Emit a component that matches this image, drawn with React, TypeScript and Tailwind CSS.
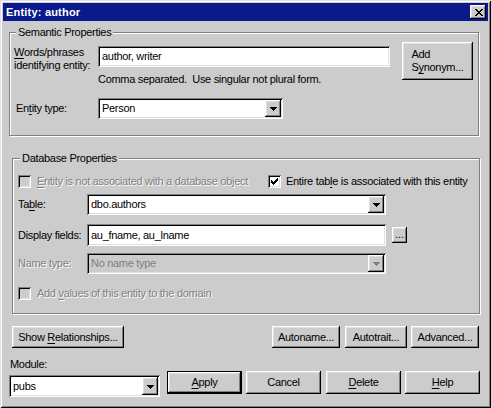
import React from 'react';

// classic 3D edges
const RAISED =
  'bg-[#cccccc] shadow-[inset_-1px_-1px_0_#000,inset_1px_1px_0_#fff,inset_-2px_-2px_0_#808080,inset_2px_2px_0_#dfdfdf]';
const DEFAULT_BTN =
  'bg-[#cccccc] shadow-[inset_0_0_0_1px_#000,inset_-2px_-2px_0_#000,inset_2px_2px_0_#fff,inset_-3px_-3px_0_#808080,inset_3px_3px_0_#dfdfdf]';
const SUNKEN =
  'shadow-[inset_1px_1px_0_#808080,inset_-1px_-1px_0_#fff,inset_2px_2px_0_#000,inset_-2px_-2px_0_#dfdfdf]';
const ETCHED = 'border border-[#808080] shadow-[inset_1px_1px_0_#fff,1px_1px_0_#fff]';
const DISABLED = 'text-[#808080] [text-shadow:1px_1px_0_#fff]';

const U = ({ children }: { children: React.ReactNode }) => (
  <span className="underline decoration-1 underline-offset-[2px]">{children}</span>
);

const Arrow = ({ disabled }: { disabled?: boolean }) => (
  <svg width="7" height="4" viewBox="0 0 7 4" shapeRendering="crispEdges">
    <g fill={disabled ? '#808080' : '#000'}>
      <rect x="0" y="0" width="7" height="1" />
      <rect x="1" y="1" width="5" height="1" />
      <rect x="2" y="2" width="3" height="1" />
      <rect x="3" y="3" width="1" height="1" />
    </g>
  </svg>
);

const CloseGlyph = () => (
  <svg width="8" height="7" viewBox="0 0 8 7" shapeRendering="crispEdges">
    <g fill="#000">
      <rect x="0" y="0" width="2" height="1" />
      <rect x="6" y="0" width="2" height="1" />
      <rect x="1" y="1" width="2" height="1" />
      <rect x="5" y="1" width="2" height="1" />
      <rect x="2" y="2" width="4" height="1" />
      <rect x="3" y="3" width="2" height="1" />
      <rect x="2" y="4" width="4" height="1" />
      <rect x="1" y="5" width="2" height="1" />
      <rect x="5" y="5" width="2" height="1" />
      <rect x="0" y="6" width="2" height="1" />
      <rect x="6" y="6" width="2" height="1" />
    </g>
  </svg>
);

const CheckGlyph = () => (
  <svg width="7" height="7" viewBox="0 0 7 7" shapeRendering="crispEdges">
    <g fill="#000">
      <rect x="6" y="0" width="1" height="1" />
      <rect x="5" y="1" width="2" height="1" />
      <rect x="0" y="2" width="1" height="1" />
      <rect x="4" y="2" width="3" height="1" />
      <rect x="0" y="3" width="2" height="1" />
      <rect x="3" y="3" width="3" height="1" />
      <rect x="0" y="4" width="5" height="1" />
      <rect x="1" y="5" width="3" height="1" />
      <rect x="2" y="6" width="1" height="1" />
    </g>
  </svg>
);

const Check = ({ checked, disabled }: { checked?: boolean; disabled?: boolean }) => (
  <span
    className={`w-[13px] h-[13px] shrink-0 flex items-center justify-center ${
      disabled ? 'bg-[#cccccc]' : 'bg-white'
    } ${SUNKEN}`}
  >
    {checked && <CheckGlyph />}
  </span>
);

const Btn = ({
  className = '',
  primary,
  children,
}: {
  className?: string;
  primary?: boolean;
  children: React.ReactNode;
}) => (
  <button
    type="button"
    className={`${primary ? DEFAULT_BTN : RAISED} shrink-0 whitespace-nowrap flex items-center justify-center ${className}`}
  >
    {children}
  </button>
);

const Combo = ({
  className = '',
  value,
  disabled,
}: {
  className?: string;
  value: string;
  disabled?: boolean;
}) => (
  <div className={`${SUNKEN} ${disabled ? 'bg-[#cccccc]' : 'bg-white'} shrink-0 flex p-[2px] ${className}`}>
    <span className={`flex-1 flex items-center pl-[2px] ${disabled ? 'text-[#808080]' : ''}`}>{value}</span>
    <span className={`w-[16px] flex items-center justify-center pt-[1px] ${RAISED}`}>
      <Arrow disabled={disabled} />
    </span>
  </div>
);

const Field = ({ className = '', value }: { className?: string; value: string }) => (
  <div className={`${SUNKEN} bg-white shrink-0 flex items-center pl-[4px] ${className}`}>{value}</div>
);

const Group = ({
  className = '',
  label,
  labelPos,
  children,
}: {
  className?: string;
  label: string;
  labelPos: string;
  children: React.ReactNode;
}) => (
  <div className={`relative ${ETCHED} ${className}`}>
    <span className={`absolute -top-[7px] ${labelPos} px-[2px] bg-[#cccccc]`}>{label}</span>
    {children}
  </div>
);

export default function App() {
  return (
    <div className="w-[491px] h-[408px] bg-[#cccccc] p-[3px] flex flex-col whitespace-nowrap text-black text-[11px] leading-[13px] tracking-[-0.3px] font-['Liberation_Sans',Arial,sans-serif] shadow-[inset_1px_1px_0_#dfdfdf,inset_-1px_-1px_0_#000,inset_2px_2px_0_#fff,inset_-2px_-2px_0_#808080]">
      {/* Title bar */}
      <div className="h-[18px] shrink-0 bg-[#0a1a8c] flex items-center justify-between pl-[3px] pr-[2px]">
        <span className="text-white font-bold leading-[18px] tracking-[0.2px]">Entity: author</span>
        <button type="button" className={`w-[16px] h-[14px] pl-[1px] flex items-center justify-center ${RAISED}`}>
          <CloseGlyph />
        </button>
      </div>

      <div className="pl-[6px] pr-[9px] flex flex-col">
        {/* Semantic Properties */}
        <Group label="Semantic Properties" labelPos="left-[6px]" className="mt-[11px] h-[104px]">
          <div className="flex items-start pl-[4px] pt-[9px]">
            <div className="w-[84px] mt-[4px]">
              <U>W</U>ords/phrases
              <br />
              identifying entity:
            </div>
            <div className="w-[292px] mt-[4px] flex flex-col">
              <Field className="h-[21px]" value="author, writer" />
              <div className="mt-[6px] whitespace-pre">Comma separated.  Use singular not plural form.</div>
            </div>
            <Btn className="ml-[12px] w-[71px] h-[38px]">
              <span className="flex flex-col items-start">
                <span>Add</span>
                <span>
                  S<U>y</U>nonym...
                </span>
              </span>
            </Btn>
          </div>
          <div className="flex items-center pl-[6px] mt-[12px]">
            <span className="w-[82px]">
              En<U>t</U>ity type:
            </span>
            <Combo className="w-[185px] h-[21px]" value="Person" />
          </div>
        </Group>

        {/* Database Properties */}
        <Group
          label="Database Properties"
          labelPos="left-[7px]"
          className="mt-[22px] ml-[3px] -mr-[1px] h-[156px]"
        >
          <div className="flex items-center pl-[5px] pt-[16px]">
            <div className="w-[250px] flex items-center">
              <Check disabled />
              <span className={`ml-[6px] ${DISABLED}`}>
                <U>E</U>ntity is not associated with a database object
              </span>
            </div>
            <Check checked />
            <span className="ml-[5px]">
              Entire tab<U>l</U>e is associated with this entity
            </span>
          </div>
          <div className="flex items-center pl-[5px] mt-[6px]">
            <span className="w-[69px]">
              Ta<U>b</U>le:
            </span>
            <Combo className="w-[299px] h-[21px]" value="dbo.authors" />
          </div>
          <div className="flex items-center pl-[5px] mt-[9px]">
            <span className="w-[69px]">Display fields:</span>
            <Field className="w-[299px] h-[22px]" value="au_fname, au_lname" />
            <Btn className="ml-[6px] w-[15px] h-[16px]">
              <span className="leading-[10px] pb-[2px] tracking-normal">...</span>
            </Btn>
          </div>
          <div className="flex items-center pl-[5px] mt-[7px]">
            <span className={`w-[69px] ${DISABLED}`}>Name type:</span>
            <Combo disabled className="w-[299px] h-[21px]" value="No name type" />
          </div>
          <div className="flex items-center pl-[5px] mt-[13px]">
            <Check disabled />
            <span className={`ml-[6px] ${DISABLED}`}>
              Add <U>v</U>alues of this entity to the domain
            </span>
          </div>
        </Group>

        {/* Action buttons */}
        <div className="flex items-center mt-[12px] ml-[3px]">
          <Btn className="w-[112px] h-[22px]">
            Show&nbsp;<U>R</U>elationships...
          </Btn>
          <div className="flex-1" />
          <Btn className="w-[68px] h-[22px]">Autoname...</Btn>
          <Btn className="ml-[5px] w-[62px] h-[22px]">Autotrait...</Btn>
          <Btn className="ml-[4px] w-[68px] h-[22px]">Advanced...</Btn>
        </div>

        {/* Module + dialog buttons */}
        <div className="flex items-start mt-[10px]">
          <div className="flex flex-col">
            <span className="ml-[1px]">Module:</span>
            <Combo className="mt-[4px] w-[151px] h-[22px]" value="pubs" />
          </div>
          <Btn primary className="ml-[7px] mt-[13px] w-[75px] h-[23px]">
            <U>A</U>pply
          </Btn>
          <Btn className="ml-[4px] mt-[13px] w-[75px] h-[23px]">Cancel</Btn>
          <Btn className="ml-[5px] mt-[13px] w-[75px] h-[23px]">
            <U>D</U>elete
          </Btn>
          <Btn className="ml-[4px] mt-[13px] w-[75px] h-[23px]">
            <U>H</U>elp
          </Btn>
        </div>
      </div>
    </div>
  );
}
